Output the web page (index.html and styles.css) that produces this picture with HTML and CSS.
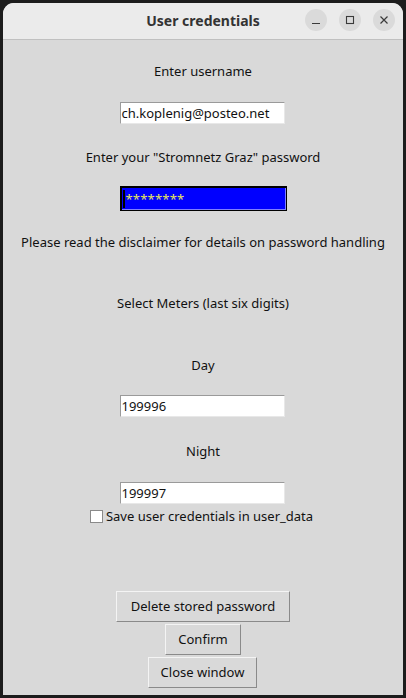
FILE: index.html
```html
<!DOCTYPE html>
<html>
<head>
<meta charset="utf-8">
<link rel="stylesheet" href="styles.css">
</head>
<body>
<div class="window">
  <div class="titlebar">
    <div class="title">User credentials</div>
    <div class="controls">
      <span class="ctl"><svg width="10" height="10" viewBox="0 0 10 10"><path d="M1 8.5h8" stroke="#3a3a3a" stroke-width="1.2"/></svg></span>
      <span class="ctl"><svg width="10" height="10" viewBox="0 0 10 10"><rect x="1.5" y="1.5" width="7" height="7" fill="none" stroke="#3a3a3a" stroke-width="1.1"/></svg></span>
      <span class="ctl"><svg width="10" height="10" viewBox="0 0 10 10"><path d="M1.5 1.5l7 7M8.5 1.5l-7 7" stroke="#3a3a3a" stroke-width="1.2"/></svg></span>
    </div>
  </div>
  <div class="content">
    <div class="label l1">Enter username</div>
    <div class="entry e1">ch.koplenig@posteo.net</div>
    <div class="label l2">Enter your "Stromnetz Graz" password</div>
    <div class="entry pw"><span class="cursor"></span><span class="stars">********</span></div>
    <div class="label l3">Please read the disclaimer for details on password handling</div>
    <div class="label l4">Select Meters (last six digits)</div>
    <div class="label l5">Day</div>
    <div class="entry e3">199996</div>
    <div class="label l6">Night</div>
    <div class="entry e4">199997</div>
    <div class="check"><span class="box"></span><span>Save user credentials in user_data</span></div>
    <div class="btn b1">Delete stored password</div>
    <div class="btn b2">Confirm</div>
    <div class="btn b3">Close window</div>
  </div>
</div>
</body>
</html>
```
FILE: styles.css
```css
html, body {
  margin: 0;
  padding: 0;
  background: #1c1c1c;
  width: 406px;
  height: 698px;
  overflow: hidden;
}
.window {
  margin: 3px 3px 0 3px;
  width: 400px;
  height: 692px;
  border-radius: 11px 11px 0 0;
  overflow: hidden;
  background: #d9d9d9;
  display: flex;
  flex-direction: column;
  font-family: "Noto Sans", "Open Sans", sans-serif;
  font-size: 13px;
  color: #111;
}
.titlebar {
  height: 36px;
  background: #ebebeb;
  border-bottom: 1px solid #c0c0c0;
  position: relative;
  display: flex;
  align-items: center;
  justify-content: center;
  flex-shrink: 0;
}
.title {
  font-family: "Noto Sans", sans-serif;
  font-weight: bold;
  font-size: 14px;
  color: #333;
  margin-top: -2px;
}
.controls {
  position: absolute;
  right: 8px;
  top: 6px;
  display: flex;
  gap: 12px;
}
.ctl {
  width: 22px;
  height: 22px;
  border-radius: 50%;
  background: #dadada;
  display: flex;
  align-items: center;
  justify-content: center;
}
.content {
  display: flex;
  flex-direction: column;
  align-items: center;
}
.label {
  height: 20px;
  line-height: 20px;
  white-space: nowrap;
}
.l1 { margin-top: 21px; }
.e1 { margin-top: 21px; }
.l2 { margin-top: 23px; }
.pw { margin-top: 19px; }
.l3 { margin-top: 21px; }
.l4 { margin-top: 41px; }
.l5 { margin-top: 42px; }
.e3 { margin-top: 20px; }
.l6 { margin-top: 24px; }
.e4 { margin-top: 21px; }
.entry {
  width: 162px;
  height: 20px;
  line-height: 20px;
  background: #fff;
  border: 1px solid;
  border-color: #9a9a9a #e8e8e8 #e8e8e8 #9a9a9a;
  padding: 0 0 0 1px;
  margin-left: -2px;
  white-space: nowrap;
  overflow: hidden;
}
.entry.pw {
  width: 164px;
  height: 22px;
  background: #0000ff;
  border: 2px solid #000;
  border-right-width: 1px;
  border-bottom-width: 1px;
  box-shadow: inset -1px -1px 0 #8080ff;
  padding: 0;
  margin-left: 0;
  display: flex;
  align-items: center;
  color: #e8e85a;
}
.cursor {
  width: 2px;
  height: 18px;
  background: #000;
  margin-left: 1px;
}
.stars {
  font-size: 13px;
  margin-left: 1px;
  letter-spacing: 0.2px;
}
.check {
  margin-top: 2px;
  height: 20px;
  display: flex;
  align-items: center;
  gap: 3px;
  margin-left: -3px;
}
.box {
  width: 11px;
  height: 11px;
  background: #fff;
  border: 1px solid #8a8a8a;
}
.btn {
  border: 1px solid;
  border-color: #f4f4f4 #8a8a8a #8a8a8a #f4f4f4;
  background: #d9d9d9;
  line-height: 29px;
  text-align: center;
  white-space: nowrap;
  box-sizing: border-box;
  height: 31px;
}
.b1 { margin-top: 65px; width: 174px; }
.b2 { margin-top: 2px; width: 76px; }
.b3 { margin-top: 2px; width: 109px; margin-left: -1px; }
```
